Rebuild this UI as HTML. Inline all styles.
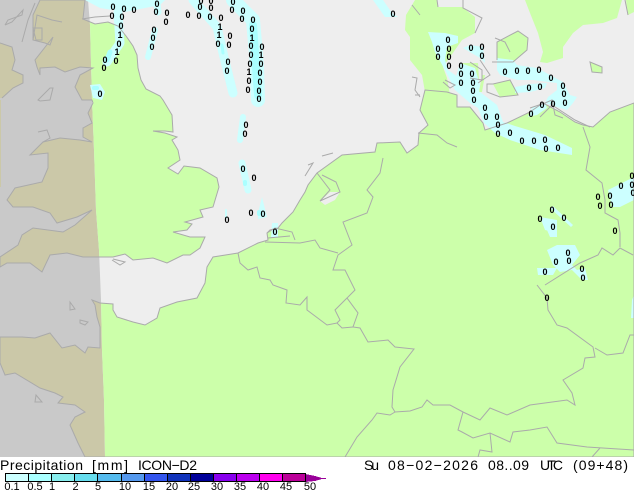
<!DOCTYPE html>
<html><head><meta charset="utf-8">
<style>
html,body{margin:0;padding:0;background:#fff;width:634px;height:490px;overflow:hidden}
svg{display:block}
text{font-family:"Liberation Sans",sans-serif;fill:#000}
.m text{font-size:9px;font-weight:bold;text-anchor:middle}
.b text{font-size:11px;text-anchor:middle}
</style></head><body>
<svg width="634" height="490" viewBox="0 0 634 490" xmlns="http://www.w3.org/2000/svg">
<defs>
<clipPath id="L"><path d="M0,0H88L90,25 92,100 94,150 96,210 99,250 101,300 102,350 104,400 105,457H0Z"/></clipPath>
<clipPath id="R"><path d="M634,0H88L90,25 92,100 94,150 96,210 99,250 101,300 102,350 104,400 105,457H634Z"/></clipPath>
<path id="gb" d="M40,0 L85,0 83,19 95,24 108,22 118,26 126,36 133,46 137,55 138,68 141,80 146,89 160,96 163,100 172,115 173,132 165,131 153,131 165,133 177,137 172,140 178,150 180,160 168,168 178,174 184,166 200,168 217,178 219,187 213,207 200,210 203,217 185,222 192,224 187,230 173,232 190,237 205,237 200,248 190,255 183,255 167,263 153,258 133,260 125,254 113,257 97,257 83,257 67,253 50,255 42,272 30,263 7,263 0,267 0,257 18,245 22,235 33,228 63,232 75,225 92,210 77,217 57,223 50,213 33,207 13,207 7,200 15,188 42,182 48,168 48,153 30,155 43,142 60,138 80,140 92,142 83,137 83,128 92,123 88,113 93,103 92,100 82,100 75,87 80,75 93,68 80,67 65,72 55,67 40,68 40,75 37,67 35,60 53,37 50,45 45,43 33,40 33,15Z"/>
<path id="fr" d="M634,457 L634,103 610,112 593,127 583,125 575,122 560,112 543,103 530,112 507,123 485,130 483,123 470,107 457,107 457,95 447,92 425,90 420,110 428,125 419,133 418,145 407,153 400,142 377,143 375,152 342,155 317,173 308,185 305,192 300,200 293,212 282,223 278,228 270,230 267,233 268,240 258,243 238,253 213,257 207,267 205,283 197,298 177,302 160,308 157,318 145,325 133,322 117,317 113,310 113,304 100,303 92,300 95,305 97,317 100,327 100,348 88,347 85,353 75,345 62,348 50,333 35,338 22,337 0,337 0,363 5,375 15,373 40,388 55,393 63,397 58,403 75,405 85,412 75,417 70,425 78,443 85,457Z"/>
</defs>
<rect width="634" height="457" fill="#c9c9c9"/>
<g clip-path="url(#L)" fill="#cbc8a8">
<use href="#gb"/><use href="#fr"/>
<path d="M0,43 12,47 15,60 12,70 23,75 23,83 13,88 2,98H0Z"/>
<rect x="0" y="100" width="1" height="87"/>
</g>
<g clip-path="url(#R)">
<rect width="634" height="457" fill="#eeeeee"/>
<g fill="#ccffaa"><use href="#gb"/><use href="#fr"/>
<path d="M415,0 437,0 438,7 462,7 475,17 475,33 462,40 443,67 447,78 450,95 425,92 422,75 410,60 410,37 405,30 406,15Z"/>
<path d="M497,60 497,42 518,31 528,38 527,50 513,62Z"/>
<path d="M493,84 510,80 518,95 500,97Z"/>
<path d="M460,63 478,63 479,80 468,80Z"/>
<path d="M482,75 485,75 482,92 479,92Z"/>
<path d="M525,0 530,13 538,33 543,52 540,62 547,63 563,58 563,47 573,33 583,25 603,23 617,18 622,0Z"/>
<path d="M590,62 602,67 602,73 592,72Z"/>
<path d="M634,0 H626 L628,15 634,12Z"/>
</g>
<path d="M320,201 330,192 340,192 335,200 325,205Z" fill="#eeeeee"/>
</g>
<g fill="#ccffff" stroke="none">
<path d="M428,32 445,33 458,36 458,43 447,47 445,60 448,70 455,75 465,85 480,92 497,105 503,122 515,126 545,135 572,148 572,155 540,150 510,140 495,133 484,123 478,108 470,103 455,90 445,70 435,52 432,42Z"/>
<path d="M460,63 475,68 480,85 478,98 468,98 455,80Z"/>
<path d="M463,48 470,45 483,47 485,63 480,58Z"/>
<path d="M497,58 513,60 517,65 537,68 550,75 563,82 570,95 577,97 573,103 567,110 557,107 545,103 548,97 557,90 557,83 533,80 518,80 510,78 500,75 497,70Z"/>
<path d="M515,87 530,84 547,83 545,88 530,92 515,93Z"/><path d="M528,117 532,108 545,103 547,108 537,115Z"/>
<path d="M540,217 557,220 557,233 545,230Z"/><path d="M550,208 553,206 573,225 571,227Z"/>
<path d="M547,250 557,245 575,245 580,255 572,265 577,270 585,268 588,280 582,280 572,270 560,272 553,265Z"/>
<path d="M537,268 557,268 553,275 538,275Z"/><path d="M547,230H557V237H550Z"/>
<path d="M608,190 634,177 634,200 620,207 612,207Z"/><path d="M634,295V318H631L632,300Z"/>
<path d="M373,0H383L392,13 398,17H385Z"/>
<path d="M85,0H165L160,5 125,12 100,8Z"/>
<path d="M90,85 100,84 105,92 102,100 93,98Z"/>
<path d="M272,223h6v14h-7z"/>
<path d="M258,213l4-16 5,20-9,2z"/>
</g>
<g fill="none" stroke="#ccffff" stroke-linecap="round" stroke-linejoin="round">
<path d="M118,13 120,43 107,62" stroke-width="9"/>
<path d="M155,30 148,57" stroke-width="6"/><path d="M157,3 158,12" stroke-width="7"/>
<path d="M193,0 217,27 223,53 233,93" stroke-width="9"/>
<path d="M233,0 253,20 257,67 258,100" stroke-width="14"/>
<path d="M243,117 240,140" stroke-width="6"/><path d="M242,163 248,190" stroke-width="7"/>
<path d="M226,210V218" stroke-width="2"/>
</g>
<g fill="none" stroke="#aaffff" stroke-linecap="round" stroke-linejoin="round">
<path d="M253,25 256,67 258,95" stroke-width="8"/><path d="M222,45 223,53" stroke-width="3"/>
<path d="M110,52 107,60" stroke-width="5"/><path d="M94,88h3" stroke-width="4"/>
<path d="M245,182v2" stroke-width="4"/><path d="M259,212v2" stroke-width="4"/>
</g>
<g fill="none" stroke="#aaaaaa" stroke-width="1">
<use href="#gb"/><use href="#fr"/>
<path d="M0,43 12,47 15,60 12,70 23,75 23,83 13,88 2,98"/>
<path d="M5,25 8,20 22,15 23,10 12,22 5,25M35,3 28,20 22,42M33,40 37,15 52,20 62,22M33,28 42,28 42,40 36,40ZM38,100 50,88 53,88 50,100 40,101ZM82,19 95,17 110,16"/>
<path d="M38,132 47,130 50,138 43,142"/>
<path d="M437,0 438,7M412,5 420,15M463,0V8L482,18 475,33M495,38 505,42 510,52M480,60 490,75 478,83M470,62 482,70 482,80 470,78M445,80 455,85 450,88 443,82"/>
<path d="M497,60 497,42 518,31 528,38 527,50 513,62 492,62M493,84 510,80 518,95 500,97 487,92 487,84ZM590,62 602,67 602,73 592,72ZM625,0 628,15"/>
<path d="M412,77 417,78 415,90 420,97M415,95H420"/>
<path d="M530,108 545,103 552,100 555,115 563,118M540,117 552,105 575,120 590,127"/>
<path d="M418,133 437,135 447,143 457,147"/>
<path d="M322,156 333,153M308,165 313,163 305,176"/>
<path d="M317,173 330,190 320,201 340,192 336,182 322,175"/>
<path d="M583,127 590,147 586,170 602,183 605,200 605,213 618,220 620,233 620,247"/>
<path d="M383,158 380,173 367,190 373,197 367,213 343,222 350,240 352,245 338,255 333,270 345,270 355,290 347,298 358,313 353,327 360,328 368,342 388,340 395,347 414,349 400,367 393,390 392,407 395,412 410,411 422,407 427,400 433,405 450,405 463,412 480,420 490,408 507,415 530,405 567,400 575,405 572,393 563,380 583,368 585,358 595,357 593,347 567,328 557,325 548,310 547,298 537,285M545,285 580,263 598,255 602,248 613,255 620,248 633,255"/>
<path d="M595,348 607,355 623,353 630,335H634"/>
<path d="M238,253 240,263 248,270 257,267 260,278 270,280 273,285 287,290 286,303 300,305 307,297 307,310 327,325 337,323 342,328 353,327M347,298 335,310 340,320 337,323"/>
<path d="M265,242 300,243 315,240 320,248 338,253"/>
<path d="M267,233 275,228 292,232 295,240M268,238 290,236"/>
<path d="M345,457 357,437 372,420 377,413 390,415 395,412"/>
<path d="M463,412 458,430 462,432 473,438 490,433 510,442 513,432 530,430 547,427 557,443 587,447 634,450M490,433 492,452 480,450 478,457M600,448 592,457"/>
<path d="M70,302 75,309 70,310ZM80,320 88,322 85,325 80,323ZM36,395 42,402 35,402Z"/>
<path d="M113,259 125,262 120,265 112,260"/>
</g>
<g class="m" transform="translate(0,3)">
<text x="113 124 134 112 122 121 119 116 105 104" y="7 9 10 16 17 26 44 61 60 68">0000000000</text>
<text x="100 157 156 167 166 154 153 152 188 199" y="94 4 12 13 22 30 38 47 15 16">0000000000</text>
<text x="210 200 211 221 218 230 229 228 227 233" y="17 7 8 18 44 36 45 62 71 2">0000000000</text>
<text x="232 243 242 253 252 251 262 251 261 250" y="10 11 19 20 29 46 47 55 64 64">0000000000</text>
<text x="260 260 249 259 248 259 246 245 243 254" y="73 82 81 91 90 99 125 134 169 178">0000000000</text>
<text x="251 263 227 275 201 211 393 448 438 449" y="213 214 220 232 1 1 14 40 49 49">0000000000</text>
<text x="438 449 449 471 482 482 461 461 472 461" y="57 57 66 48 47 56 66 74 74 83">0000000000</text>
<text x="473 473 474 485 486 497 498 498 510 522" y="83 91 100 108 117 117 125 134 133 141">0000000000</text>
<text x="534 545 546 558 505 517 528 539 551 563" y="141 140 149 148 72 71 71 70 78 86">0000000000</text>
<text x="564 565 553 542 531 540 529 632 632 633" y="94 103 104 105 114 87 88 176 185 193">0000000000</text>
<text x="621 610 611 598 600 552 564 540 553 615" y="186 196 205 197 206 210 218 219 227 231">0000000000</text>
<text x="568 569 556 545 582 583 547" y="253 261 262 272 269 278 298">0000000</text>
<text x="120 117 220 219 252 261 249" y="35 52 27 35 38 55 72">1111111</text>
</g>
<rect y="457" width="634" height="33" fill="#fff"/>
<g font-size="14">
<text x="0" y="470" textLength="83" lengthAdjust="spacing">Precipitation</text>
<text x="92" y="470" textLength="36" lengthAdjust="spacing">[mm]</text>
<text x="138" y="470" textLength="59" lengthAdjust="spacing">ICON−D2</text>
<text x="364" y="470" textLength="15" lengthAdjust="spacing">Su</text>
<text x="388" y="470" textLength="90" lengthAdjust="spacing">08−02−2026</text>
<text x="488" y="470" textLength="41" lengthAdjust="spacing">08..09</text>
<text x="540" y="470" textLength="23" lengthAdjust="spacing">UTC</text>
<text x="573" y="470" textLength="55" lengthAdjust="spacing">(09+48)</text>
</g>
<g shape-rendering="crispEdges">
<rect x="5" y="474" width="23" height="7" fill="#ccffff"/>
<rect x="28" y="474" width="23" height="7" fill="#aaffff"/>
<rect x="51" y="474" width="23" height="7" fill="#88eeee"/>
<rect x="74" y="474" width="23" height="7" fill="#66ddee"/>
<rect x="97" y="474" width="24" height="7" fill="#55bbee"/>
<rect x="121" y="474" width="23" height="7" fill="#5599ee"/>
<rect x="144" y="474" width="23" height="7" fill="#3355ee"/>
<rect x="167" y="474" width="23" height="7" fill="#1133bb"/>
<rect x="190" y="474" width="23" height="7" fill="#000099"/>
<rect x="213" y="474" width="23" height="7" fill="#8800ee"/>
<rect x="236" y="474" width="23" height="7" fill="#bb00ee"/>
<rect x="259" y="474" width="23" height="7" fill="#ff00ee"/>
<rect x="282" y="474" width="23" height="7" fill="#bb0099"/>
<path d="M305,474 L315,476 322,478 330,478.5 322,479 315,481 305,482Z" fill="#990099"/>
<path d="M5.5,473.5H305.5V481.5H5.5ZM28.5,474V481M51.5,474V481M74.5,474V481M97.5,474V481M121.5,474V481M144.5,474V481M167.5,474V481M190.5,474V481M213.5,474V481M236.5,474V481M259.5,474V481M282.5,474V481" fill="none" stroke="#000"/>
</g>
<g class="b">
<text x="12" y="490">0.1</text><text x="35" y="490">0.5</text><text x="52" y="490">1</text><text x="75.5" y="490">2</text><text x="98" y="490">5</text><text x="125" y="490">10</text><text x="149" y="490">15</text><text x="172" y="490">20</text><text x="194" y="490">25</text><text x="217" y="490">30</text><text x="240" y="490">35</text><text x="263" y="490">40</text><text x="286" y="490">45</text><text x="310" y="490">50</text>
</g>
</svg>
</body></html>
